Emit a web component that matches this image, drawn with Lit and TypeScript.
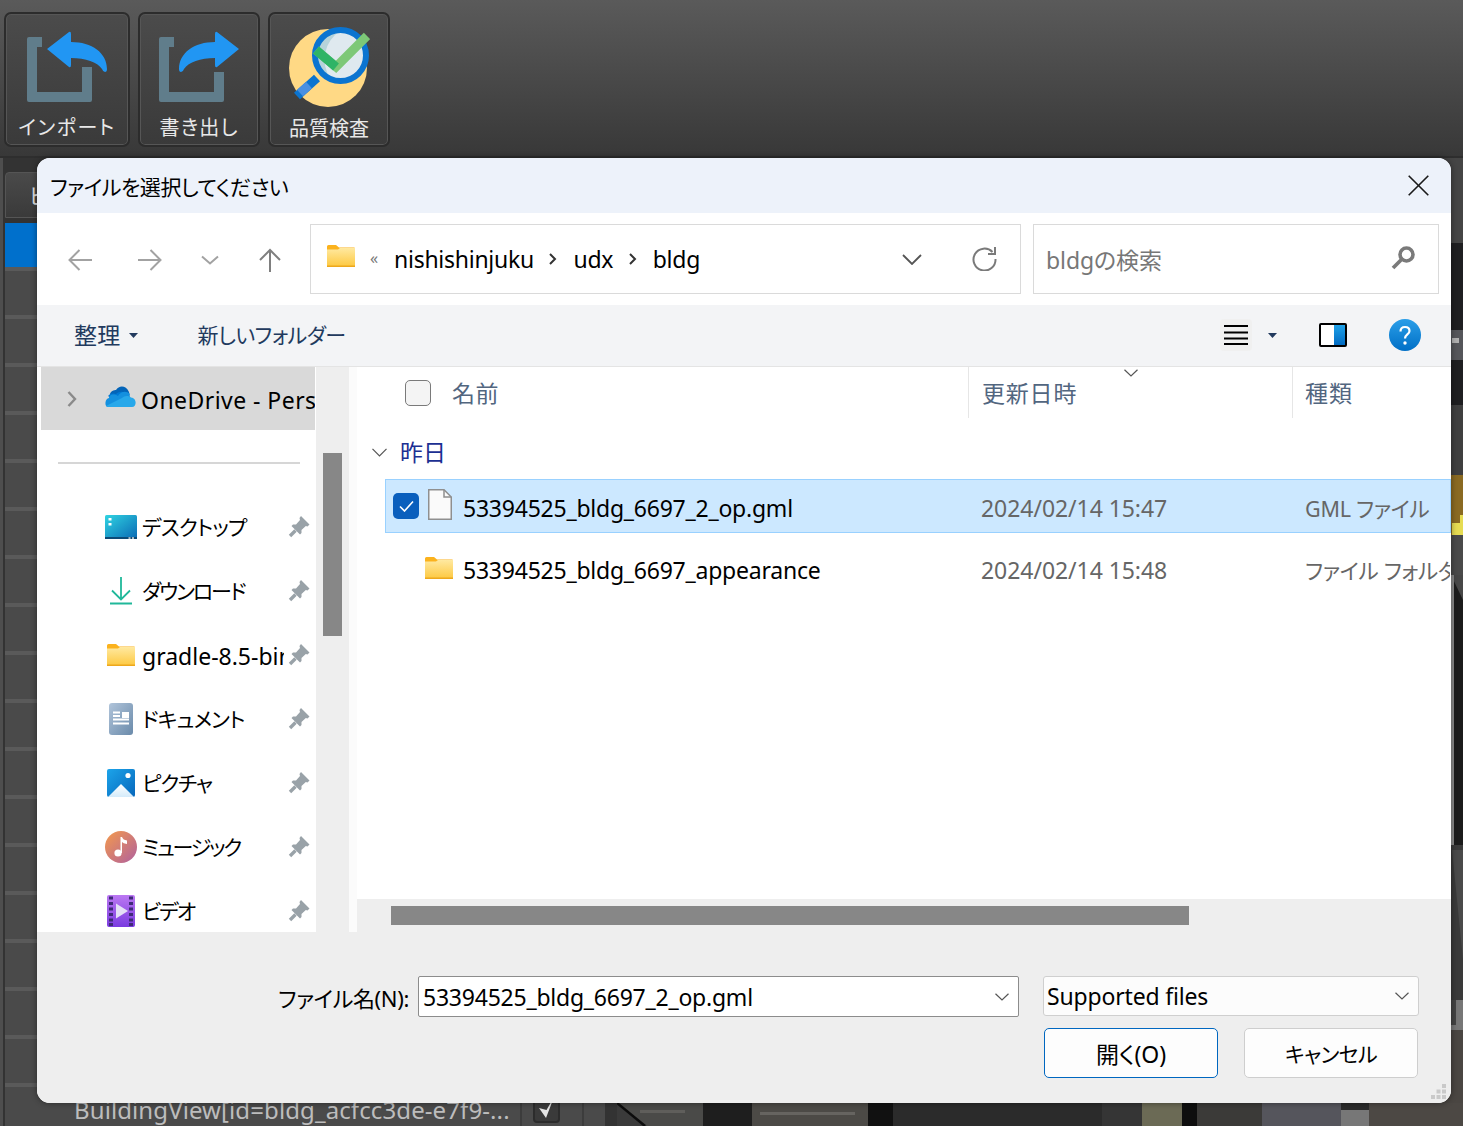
import { LitElement, html, css } from "lit";
import { customElement } from "lit/decorators.js";

const folder = (cls: string) => html`<svg class=${cls} viewBox="0 0 28 22">
  <defs><linearGradient id="fg" x1="0" y1="0" x2="0" y2="1"><stop offset="0" stop-color="#ffe9a0"/><stop offset="1" stop-color="#fdc83f"/></linearGradient></defs>
  <path d="M0 1.5Q0 0 1.5 0H9L12 2.5H27Q28 2.5 28 3.5V6H0Z" fill="#fbb21d"/>
  <path d="M0 4.5H11L13 3H28V21Q28 22 27 22H1Q0 22 0 21Z" fill="url(#fg)"/>
  <rect x="0" y="20.5" width="28" height="1.5" fill="#eda81c"/>
</svg>`;

const pin = html`<svg class="pin" viewBox="0 0 22 22"><path d="M13 0L21.5 8.5 19.5 10.5 17.8 10 13.5 14 13.5 17 12 18.5 3.5 10 5 8.5 8 8.5 12 4 11.5 2Z" fill="#99a2a8"/><path d="M7.5 14.5L2 20" stroke="#99a2a8" stroke-width="3.4" fill="none"/></svg>`;

const chev = (cls: string) => html`<svg class=${cls} viewBox="0 0 14 8"><path d="M.5.8L7 7 13.5.8" fill="none" stroke="#555" stroke-width="1.2"/></svg>`;

const navIcons = {
  desktop: html`<svg class="ico" viewBox="0 0 32 24"><defs><linearGradient id="dg" x1="0" y1="0" x2="1" y2="1"><stop offset="0" stop-color="#30d4e2"/><stop offset="1" stop-color="#0a69b4"/></linearGradient></defs><path d="M0 1.5Q0 0 1.5 0h29Q32 0 32 1.5V24H0Z" fill="url(#dg)"/><rect y="22" width="32" height="2" fill="#0c4a76"/><rect x="3.5" y="3" width="3" height="2.5" fill="#fff"/><rect x="3.5" y="8" width="3" height="2.5" fill="#fff"/><rect x="23.5" y="22.3" width="2" height="1.5" fill="#ddd"/><rect x="27" y="22.3" width="2" height="1.5" fill="#ddd"/></svg>`,
  download: html`<svg class="ico" viewBox="0 0 32 28"><path d="M16 0V22M7 13.5L16 22.5 25 13.5" fill="none" stroke="#20b89a" stroke-width="1.8"/><rect x="5" y="25.5" width="22" height="2" fill="#20b89a"/></svg>`,
  folder: folder("ico-folder"),
  doc: html`<svg class="ico" viewBox="0 0 32 32"><defs><linearGradient id="docg" x1="0" y1="0" x2="1" y2="1"><stop offset="0" stop-color="#b0c4da"/><stop offset="1" stop-color="#6a8aaa"/></linearGradient></defs><rect x="4" y="0" width="24" height="32" rx="3" fill="url(#docg)"/><path d="M8 9.5h7M8 13h7M8 16.5h16M8 20.5h16" stroke="#fff" stroke-width="1.8"/><rect x="17" y="9" width="7" height="6" fill="#fff"/></svg>`,
  picture: html`<svg class="ico" viewBox="0 0 32 28"><defs><linearGradient id="pg" x1="0" y1="0" x2="1" y2="1"><stop offset="0" stop-color="#1ca4ea"/><stop offset="1" stop-color="#0767bb"/></linearGradient><linearGradient id="pw" x1="0" y1="0" x2="0" y2="1"><stop offset="0" stop-color="#fff"/><stop offset="1" stop-color="#d4ebfa"/></linearGradient></defs><rect x="2" y="0" width="28" height="28" rx="2" fill="url(#pg)"/><path d="M3 28L16 15 29 28Z" fill="url(#pw)"/><circle cx="23" cy="6.5" r="2.6" fill="#fff"/></svg>`,
  music: html`<svg class="ico" viewBox="0 0 32 32"><defs><linearGradient id="mg" x1="0" y1="0" x2="1" y2="1"><stop offset="0" stop-color="#f49a4c"/><stop offset="1" stop-color="#b0609e"/></linearGradient></defs><circle cx="16" cy="16" r="16" fill="url(#mg)"/><circle cx="13" cy="22" r="3.6" fill="#fff"/><path d="M15.5 22V6h1.5q1 3 5 3.5V13q-4-.5-5-2V22Z" fill="#fff"/></svg>`,
  video: html`<svg class="ico" viewBox="0 0 32 32"><defs><linearGradient id="vg" x1="0" y1="0" x2="0" y2="1"><stop offset="0" stop-color="#bb78f2"/><stop offset="1" stop-color="#7a3be0"/></linearGradient></defs><rect x="2" y="0" width="28" height="32" rx="2" fill="url(#vg)"/><path d="M4 3h4M4 8.500h4M4 14h4M4 19.500h4M4 25h4M4 29.500h4M24 3h4M24 8.500h4M24 14h4M24 19.500h4M24 25h4M24 29.500h4" stroke="#3f2a78" stroke-width="3"/><path d="M11 8.500L23 16 11 23.500Z" fill="#e4e0f6"/></svg>`,
};

const places = [
  { icon: navIcons.desktop, name: "デスクトップ", ls: -0.8 },
  { icon: navIcons.download, name: "ダウンロード", ls: -2 },
  { icon: navIcons.folder, name: "gradle-8.5-bin", ls: 0 },
  { icon: navIcons.doc, name: "ドキュメント", ls: -0.8 },
  { icon: navIcons.picture, name: "ピクチャ", ls: -1.2 },
  { icon: navIcons.music, name: "ミュージック", ls: -2.2 },
  { icon: navIcons.video, name: "ビデオ", ls: -2 },
];

@customElement("app-root")
export class AppRoot extends LitElement {
  static styles = css`
    :host { display: block; position: relative; width: 1463px; height: 1126px; overflow: hidden; background: #3c3c3c;
      font-family: "Noto Sans", "Noto Sans CJK JP", sans-serif; font-feature-settings: "palt"; color: #000; }
    svg { display: block; flex: none; }

    /* application behind the dialog */
    .appbar { height: 158px; box-sizing: border-box; padding: 12px 0 0 4px; display: flex; gap: 8px;
      background: linear-gradient(#5a5a5a, #383838); border-bottom: 2px solid #2e2e2e; }
    .tbtn { width: 126px; height: 135px; box-sizing: border-box; border: 2px solid #2c2c2c; border-radius: 7px; padding-top: 16px;
      background: linear-gradient(#4b4b4b, #3a3a3a); box-shadow: inset 0 0 0 1px #565656; display: flex; flex-direction: column; align-items: center; }
    .tbtn.b2 { width: 122px; }
    .tbtn.b3 { width: 122px; padding-top: 13px; }
    .tbtn .lb { margin-top: 14px; font-size: 20px; line-height: 24px; color: #e8e8e8; letter-spacing: 1.2px; white-space: nowrap; }
    .tbtn:first-child .lb { letter-spacing: 1.5px; }
    .tbtn.b3 .lb { margin-top: 9px; letter-spacing: 0; }
    .tbi { width: 80px; height: 72px; }
    .tbq { width: 81px; height: 81px; }

    .below { display: grid; grid-template-columns: 617px 846px; height: 968px; }
    .panel { background: linear-gradient(90deg, #4e4e4e 3px, #333 3px); padding: 14px 0 0 5px; overflow: hidden; }
    .tab { width: 120px; height: 46px; box-sizing: border-box; padding-left: 23px; background: linear-gradient(#4a4a4a, #3a3a3a); border: 1px solid #555; border-radius: 4px 4px 0 0; font-size: 22px; line-height: 44px; color: #ddd; }
    .rows { display: flex; flex-direction: column; gap: 4px; margin-top: 5px; width: 600px; background: #5a5a5a; }
    .r { flex: none; height: 44px; background: #4a4a4a; display: grid; grid-template-columns: 515px 64px 21px; align-items: center; }
    .r.sel { background: #0070cc; }
    .r .t { padding-left: 69px; font-size: 24px; color: #bdbdbd; white-space: nowrap; overflow: hidden; letter-spacing: .1px; border-right: 0; }
    .ckw { height: 44px; box-sizing: border-box; border-left: 2px solid #3c3c3c; border-right: 2px solid #3c3c3c; display: flex; align-items: center; padding-left: 11px; }
    .ck { box-sizing: border-box; width: 27px; height: 27px; background: #3a3a3a; border: 2px solid #2c2c2c; border-radius: 4px; display: flex; align-items: center; justify-content: center; }
    .ck svg { width: 17px; height: 21px; margin-top: -4px; }
    .view { display: block; width: 846px; height: 968px; }

    /* dialog */
    .dlg { position: absolute; left: 37px; top: 158px; width: 1414px; height: 945px; border-radius: 13px; overflow: hidden; background: #fff;
      display: flex; flex-direction: column; box-shadow: 0 0 6px rgba(0,0,0,.45); }
    .title { flex: none; height: 55px; background: #edf2fa; display: flex; align-items: center; justify-content: space-between; padding: 0 22px 0 13px; font-size: 21px; }
    .title span { letter-spacing: -.45px; }
    .x { width: 21px; height: 21px; }

    .nav { flex: none; height: 92px; box-sizing: border-box; padding: 11px 12px 0 0; display: flex; }
    .navb { box-sizing: border-box; padding-top: 2px; display: grid; grid-template-columns: 86px 54px 65px 56px; margin-right: 12px; height: 70px; align-items: center; justify-items: center; }
    .box { box-sizing: border-box; height: 70px; border: 1.5px solid #dadada; display: flex; align-items: center; }
    .addr { width: 711px; padding-left: 16px; font-size: 23px; }
    .addr .f { width: 28px; height: 22px; margin-top: -6px; }
    .addr .q { margin: -3px 16px 0 15px; font-size: 16px; color: #777; width: 8px; }
    .addr .sep { width: 9px; height: 14px; margin: 0 16px 0 14.5px; }
    .addr .seg { letter-spacing: -.26px; }
    .addr .grow { flex: 1; }
    .addr .dd { width: 20px; height: 11px; margin-right: 50px; }
    .addr .ref { width: 25px; height: 25px; margin-right: 23px; margin-top: -2px; }
    .search { width: 406px; margin-left: 12px; padding: 0 22px 0 12px; justify-content: space-between; font-size: 23px; color: #777; }
    .search span { letter-spacing: -.1px; }
    .mag { width: 25px; height: 25px; margin-top: -4px; }

    .tools { flex: none; height: 62px; box-sizing: border-box; padding-bottom: 1px; border-bottom: 1.5px solid #e4e4e4; background: #f3f4f6; display: flex; align-items: center; padding-left: 37px; color: #223a5e; font-size: 23px; }
    .tools .o { letter-spacing: .3px; margin-top: -2px; }
    .tools .nf { margin: -2px 0 0 60px; font-size: 21px; letter-spacing: -.5px; }
    .caret { width: 9px; height: 5px; }
    .c1 { margin-left: 8px; }
    .c2r { margin-left: 16px; }
    .tools .sp { flex: 1; }
    .listb { width: 32px; height: 32px; border-radius: 4px; background: #f0f0f0; display: flex; align-items: center; justify-content: center; }
    .lines { width: 24px; height: 20px; }
    .pane { width: 28px; height: 24px; margin-left: 42px; }
    .help { width: 32px; height: 32px; margin: 0 30px 0 42px; }

    .main { flex: 1; min-height: 0; display: grid; grid-template-columns: 279px 33px 8px 1fr 0; }
    .side { overflow: hidden; }
    .od { margin-left: 4px; width: 274px; height: 63px; background: #d9d9d9; display: flex; align-items: center; overflow: hidden; font-size: 23px; white-space: nowrap; }
    .od .arr { width: 10px; height: 18px; margin-left: 26px; }
    .od .cloud { width: 32px; height: 21px; margin-left: 27px; margin-top: -4px; }
    .od .n { margin-left: 5px; letter-spacing: .45px; margin-top: 2px; }
    .div { height: 2px; background: #d6d6d6; margin: 32px 16px 31px 21px; }
    .pl { height: 64px; display: flex; align-items: center; padding-left: 68px; font-size: 21px; }
    .pl .slot { width: 32px; height: 32px; display: flex; align-items: center; justify-content: center; }
    .ico { width: 32px; }
    .ico-folder { width: 28px; height: 22px; }
    .pl .n { width: 142px; margin: -2px 0 0 5px; overflow: hidden; white-space: nowrap; }
    .pl .n.lat { font-size: 23px; margin-top: 2px; }
    .pin { width: 22px; height: 22px; margin-left: 4px; }
    .vs { background: #eee; padding: 86px 7px 0 7px; box-sizing: border-box; }
    .vs div { height: 183px; background: #878787; }
    .gutter { background: #fbfbfb; }

    .list { display: flex; flex-direction: column; min-width: 0; overflow: hidden; padding-left: 0; }
    .head { flex: none; height: 51px; display: grid; grid-template-columns: 611px 324px 1fr; font-size: 23px; color: #52667f; }
    .head > div { display: flex; align-items: center; padding-bottom: 2px; box-sizing: border-box; }
    .head .c1h { letter-spacing: .5px; }
    .head .c2, .head .c3 { border-left: 1.5px solid #e6e6e6; position: relative; }
    .head .c2 { padding-left: 13px; letter-spacing: .8px; }
    .head .c3 { padding-left: 12px; letter-spacing: 1px; }
    .cb { box-sizing: border-box; width: 26px; height: 26px; border-radius: 5px; border: 1.5px solid #7a7a7a; background: #f4f4f4; margin: 2px 21px 0 48px; }
    .sort { position: absolute; left: 155px; top: 2px; width: 14px; height: 8px; }
    .grp { flex: none; height: 61px; box-sizing: border-box; padding: 4px 0 0 15px; display: flex; align-items: center; font-size: 23px; color: #1c2f92; }
    .grp svg { width: 15px; height: 9px; margin: 4px 13px 0 0; }
    .rw { flex: none; margin-left: 28px; height: 54px; box-sizing: border-box; border: 1.5px solid transparent; display: grid; grid-template-columns: 7px 26px 44px 518px 324px 1fr; align-items: center; font-size: 23px; white-space: nowrap; }
    .rw.on { background: #cce8ff; border-color: #99d1ff; }
    .rw.r2 { margin-top: 8px; }
    .rw .tick { grid-column: 2; width: 26px; height: 26px; border-radius: 5px; background: #0a5fbd; display: flex; align-items: center; justify-content: center; }
    .rw .tick svg { width: 15px; height: 12px; }
    .rw .ic { grid-column: 3; }
    .fl { width: 24px; height: 31px; margin-left: 9px; margin-top: -4px; }
    .rw .ic .ico-folder { margin-left: 6px; }
    .rw .nm { letter-spacing: -.23px; margin-top: 4px; }
    .rw .d { color: #666; letter-spacing: -.06px; margin-top: 4px; }
    .rw .ty { color: #666; overflow: hidden; font-size: 21.5px; letter-spacing: -.25px; margin-top: 3px; }
    .spacer { flex: 1; }
    .hs { flex: none; height: 33px; box-sizing: border-box; background: #eee; padding: 7px 0 0 34px; }
    .hs div { width: 798px; height: 19px; background: #878787; }

    .foot { flex: none; height: 171px; box-sizing: border-box; background: #eee; padding-top: 44px; position: relative; font-size: 23px; }
    .fr { display: grid; grid-template-columns: 372px 601px 376px; column-gap: 0; align-items: start; }
    .fr .lbl { text-align: right; font-size: 22px; height: 41px; line-height: 44px; letter-spacing: -.35px; white-space: nowrap; }
    .inp { box-sizing: border-box; margin-left: 9px; width: 601px; height: 41px; background: #fff; border: 1.5px solid #8c8c8c; border-radius: 2px; display: flex; align-items: center; justify-content: space-between; padding: 0 9px 0 4px; }
    .inp span { letter-spacing: -.23px; }
    .sel2 { box-sizing: border-box; margin-left: 33px; width: 376px; height: 40px; background: #fcfcfc; border: 1.5px solid #cfcfcf; border-radius: 3px; display: flex; align-items: center; justify-content: space-between; padding: 0 9px 0 3px; letter-spacing: -.17px; }
    .chv { width: 14px; height: 8px; }
    .btns { display: flex; gap: 26px; margin: 11px 0 0 1007px; }
    .btn { box-sizing: border-box; width: 174px; height: 50px; border: 1.5px solid #cecece; border-radius: 5px; background: #fdfdfd; display: flex; align-items: center; justify-content: center; font-size: 23px; letter-spacing: -.1px; }
    .btn.ca { font-size: 21px; letter-spacing: -.6px; }
    .btn.pri { border-color: #0067c0; }
    .grip { position: absolute; right: 3px; bottom: 4px; width: 17px; height: 15px; }
  `;

  render() {
    const rows = Array.from({ length: 19 }, (_, i) => i);
    return html`
      <div class="appbar">
        <div class="tbtn">
          <svg class="tbi" viewBox="27 30 80 72">
            <path d="M42 37H29Q27 37 27 39V100Q27 102 29 102H90Q92 102 92 100V67H82V92H37V47H42Z" fill="#607d8b"/>
            <path d="M47 49L69 32Q71 31 71 34V42C92 42 107 53 107 69Q107 72 105 72 103 72 102 69C97 62 86 58 71 58V65Q71 68 69 67Z" fill="#2196f3"/>
          </svg>
          <div class="lb">インポート</div>
        </div>
        <div class="tbtn b2">
          <svg class="tbi" viewBox="159 30 80 72">
            <path d="M174 37H161Q159 37 159 39V100Q159 102 161 102H222Q224 102 224 100V72H214V92H169V47H174Z" fill="#607d8b"/>
            <path d="M239 49L217 32Q215 31 215 34V42C194 42 179 53 179 69Q179 72 181 72 183 72 184 69C189 62 200 58 215 58V65Q215 68 217 67Z" fill="#2196f3"/>
          </svg>
          <div class="lb">書き出し</div>
        </div>
        <div class="tbtn b3">
          <svg class="tbq" viewBox="289 27 81 81">
            <circle cx="328" cy="68" r="39" fill="#ffd985"/>
            <path d="M317 78L297 96" stroke="#0b74d0" stroke-width="9" fill="none"/>
            <path d="M309 85L300 93" stroke="#4a90e2" stroke-width="9" fill="none"/>
            <circle cx="340.500" cy="55.500" r="25" fill="#dfe9ef"/>
            <path d="M340 31A25 25 0 0 0 330 78 34 34 0 0 1 340 31Z" fill="#b6d3da"/>
            <circle cx="340.500" cy="55.500" r="25.500" fill="none" stroke="#0b74d0" stroke-width="6"/>
            <path d="M316 50L336 67 367 36" fill="none" stroke="#7dc877" stroke-width="9"/>
            <path d="M316 50L336 67" fill="none" stroke="#2fb466" stroke-width="9"/>
          </svg>
          <div class="lb">品質検査</div>
        </div>
      </div>
      <div class="below">
        <div class="panel">
          <div class="tab">ビ</div>
          <div class="rows">
            ${rows.map((i) => html`<div class="r ${i === 0 ? "sel" : ""}">
              <div class="t">${i === 18 ? "BuildingView[id=bldg_acfcc3de-e7f9-..." : ""}</div>
              <div class="ckw">${i === 18 ? html`<div class="ck"><svg viewBox="0 0 17 21"><path d="M1 11L8 21 16 0 8.500 13Z" fill="#e4e4e4"/></svg></div>` : ""}</div>
              <div></div>
            </div>`)}
          </div>
        </div>
        <svg class="view" viewBox="617 158 846 968">
          <rect x="617" y="158" width="846" height="968" fill="#454545"/>
          <rect x="617" y="243" width="846" height="162" fill="#1f1f21"/>
          <rect x="1451" y="330" width="12" height="30" fill="#55565a"/>
          <rect x="1452" y="338" width="7" height="5" fill="#b0b0b0"/>
          <rect x="617" y="405" width="846" height="70" fill="#3f3f3f"/>
          <rect x="617" y="475" width="846" height="60" fill="#8a6a22"/>
          <rect x="1460" y="515" width="3" height="8" fill="#e6dc52"/>
          <rect x="1452" y="523" width="11" height="12" fill="#e6dc52"/>
          <rect x="617" y="535" width="846" height="40" fill="#4a4a4a"/>
          <rect x="617" y="575" width="846" height="270" fill="#1b1b1b"/>
          <path d="M1451 575L1463 600V575Z" fill="#474747"/>
          <rect x="1451" y="575" width="3" height="270" fill="#8a8a8a"/>
          <rect x="617" y="845" width="846" height="155" fill="#3a3a3a"/>
          <path d="M1452 850L1463 960V850Z" fill="#4a4a4a"/>
          <rect x="617" y="1000" width="846" height="30" fill="#777"/>
          <rect x="1451" y="1000" width="5" height="25" fill="#444"/>
          <rect x="617" y="1030" width="846" height="96" fill="#4a4642"/>
          <rect x="617" y="1103" width="846" height="23" fill="#2b2b2b"/>
          <rect x="617" y="1103" width="86" height="23" fill="#4a4a48"/>
          <path d="M617 1103L647 1126H617Z" fill="#3a3a3a"/>
          <path d="M617 1103L645 1126" stroke="#0c0c0c" stroke-width="2.500"/>
          <rect x="640" y="1110" width="45" height="3" fill="#5f5e5b"/>
          <rect x="703" y="1103" width="49" height="23" fill="#1e1e1e"/>
          <rect x="752" y="1103" width="116" height="23" fill="#4c4a46"/>
          <rect x="760" y="1112" width="95" height="3" fill="#666460"/>
          <rect x="868" y="1103" width="25" height="23" fill="#111"/>
          <rect x="1102" y="1103" width="40" height="23" fill="#353535"/>
          <rect x="1142" y="1103" width="40" height="23" fill="#6b6a55"/>
          <rect x="1182" y="1103" width="15" height="23" fill="#0e0e0e"/>
          <rect x="1197" y="1103" width="65" height="23" fill="#3b3a38"/>
          <rect x="1262" y="1103" width="79" height="23" fill="#55555c"/>
          <rect x="1341" y="1110" width="28" height="16" fill="#777"/>
          <rect x="1369" y="1103" width="94" height="23" fill="#4c4844"/>
        </svg>
      </div>

      <div class="dlg">
        <div class="title">
          <span>ファイルを選択してください</span>
          <svg class="x" viewBox="0 0 21 21"><path d="M.7.7L20.300 20.300M20.300.7L.7 20.300" stroke="#1a1a1a" stroke-width="1.6"/></svg>
        </div>
        <div class="nav">
          <div class="navb">
            <svg width="24" height="22" viewBox="0 0 24 22"><path d="M24 11H2M11.500 1L1.500 11 11.500 21" fill="none" stroke="#a2a2a2" stroke-width="2"/></svg>
            <svg width="24" height="22" viewBox="0 0 24 22"><path d="M0 11H22M12.500 1L22.500 11 12.500 21" fill="none" stroke="#a2a2a2" stroke-width="2"/></svg>
            <svg width="18" height="10" viewBox="0 0 18 10"><path d="M1 1.500L9 8.500 17 1.500" fill="none" stroke="#a2a2a2" stroke-width="2"/></svg>
            <svg width="22" height="24" viewBox="0 0 22 24"><path d="M11 24V2M1 12L11 2 21 12" fill="none" stroke="#7f7f7f" stroke-width="2"/></svg>
          </div>
          <div class="box addr">
            ${folder("f")}
            <span class="q">«</span>
            <span class="seg">nishishinjuku</span>
            <svg class="sep" viewBox="0 0 9 14"><path d="M2 2L7 7 2 12" fill="none" stroke="#333" stroke-width="2"/></svg>
            <span class="seg">udx</span>
            <svg class="sep" viewBox="0 0 9 14"><path d="M2 2L7 7 2 12" fill="none" stroke="#333" stroke-width="2"/></svg>
            <span class="seg">bldg</span>
            <span class="grow"></span>
            <svg class="dd" viewBox="0 0 20 11"><path d="M1 1L10 10 19 1" fill="none" stroke="#555" stroke-width="1.800"/></svg>
            <svg class="ref" viewBox="0 0 25 25"><path d="M20.500 6A11 11 0 1 0 23.500 13" fill="none" stroke="#7a7a7a" stroke-width="2"/><path d="M23 1V8H16" fill="none" stroke="#7a7a7a" stroke-width="2"/></svg>
          </div>
          <div class="box search">
            <span>bldgの検索</span>
            <svg class="mag" viewBox="0 0 25 25"><circle cx="15.500" cy="9.500" r="6.500" fill="none" stroke="#7a7a7a" stroke-width="3.600"/><path d="M10.500 14.500L2 23" stroke="#7a7a7a" stroke-width="3.800"/></svg>
          </div>
        </div>
        <div class="tools">
          <span class="o">整理</span>
          <svg class="caret c1" viewBox="0 0 9 5"><path d="M0 0H9L4.500 5Z" fill="#223a5e"/></svg>
          <span class="nf">新しいフォルダー</span>
          <span class="sp"></span>
          <div class="listb"><svg class="lines" viewBox="0 0 24 20"><path d="M0 1H24M0 7.500H24M0 13.500H24M0 19H24" stroke="#000" stroke-width="2"/></svg></div>
          <svg class="caret c2r" viewBox="0 0 9 5"><path d="M0 0H9L4.500 5Z" fill="#223a5e"/></svg>
          <svg class="pane" viewBox="0 0 28 24">
            <defs><linearGradient id="pnb" x1="0" y1="0" x2="0" y2="1"><stop offset="0" stop-color="#20a4ea"/><stop offset="1" stop-color="#0068c0"/></linearGradient></defs>
            <rect x="1" y="1" width="26" height="22" rx="1" fill="#fff"/>
            <rect x="15" y="1" width="12" height="22" fill="url(#pnb)"/>
            <rect x="1" y="1" width="26" height="22" rx="1" fill="none" stroke="#000" stroke-width="2"/>
          </svg>
          <svg class="help" viewBox="0 0 32 32">
            <defs><linearGradient id="hg" x1="0" y1="0" x2="0" y2="1"><stop offset="0" stop-color="#2a9ee8"/><stop offset="1" stop-color="#006fc6"/></linearGradient></defs>
            <circle cx="16" cy="16" r="16" fill="url(#hg)"/>
            <path d="M11.500 12.500C11.500 9.500 13.500 8 16 8S20.500 9.500 20.500 12C20.500 15.500 16 15.500 16 19.500" fill="none" stroke="#fff" stroke-width="2.200"/>
            <circle cx="16" cy="24" r="1.700" fill="#fff"/>
          </svg>
        </div>
        <div class="main">
          <div class="side">
            <div class="od">
              <svg class="arr" viewBox="0 0 10 18"><path d="M1.500 2L8 9 1.500 16" fill="none" stroke="#8a8a8a" stroke-width="2.400"/></svg>
              <svg class="cloud" viewBox="0 0 32 21">
                <path d="M7 15C3 5 10 4 12 4 15 -1 22 -1 25 6L26 13Z" fill="#0364b8"/>
                <path d="M4 10C6 7 10 7 12 8 15 5 21 5 24 9L16 18Z" fill="#0078d4"/>
                <path d="M4 21H20L26 8C22 4 16 6 14 10 9 7 5 9 5 12 1 12 0 21 4 21Z" fill="#1490df"/>
                <path d="M4 21H28C33 21 33 12 27 11.500 24 9 20 10 18 12L2 20Q3 21 4 21Z" fill="#28a8ea"/>
              </svg>
              <span class="n">OneDrive - Personal</span>
            </div>
            <div class="div"></div>
            ${places.map((p) => html`<div class="pl">
              <span class="slot">${p.icon}</span>
              <span class="n ${p.ls === 0 ? "lat" : ""}" style="letter-spacing:${p.ls}px">${p.name}</span>
              ${pin}
            </div>`)}
          </div>
          <div class="vs"><div></div></div>
          <div class="gutter"></div>
          <div class="list">
            <div class="head">
              <div class="c1h"><span class="cb"></span>名前</div>
              <div class="c2">更新日時<svg class="sort" viewBox="0 0 14 8"><path d="M.5.8L7 7 13.500.8" fill="none" stroke="#555" stroke-width="1.200"/></svg></div>
              <div class="c3">種類</div>
            </div>
            <div class="grp">
              <svg viewBox="0 0 15 9"><path d="M.5.8L7.500 8 14.500.8" fill="none" stroke="#555" stroke-width="1.200"/></svg>
              <span>昨日</span>
            </div>
            <div class="rw on">
              <span class="tick"><svg viewBox="0 0 15 12"><path d="M1 6.500L5.500 11 14 1.500" fill="none" stroke="#fff" stroke-width="1.600"/></svg></span>
              <span class="ic"><svg class="fl" viewBox="0 0 24 31"><path d="M.75.75H16L23.250 8V30.250H.75Z" fill="#fafafa" stroke="#8f8f8f" stroke-width="1.500"/><path d="M16 .75V8H23.250" fill="none" stroke="#8f8f8f" stroke-width="1.500"/></svg></span>
              <span class="nm">53394525_bldg_6697_2_op.gml</span>
              <span class="d">2024/02/14 15:47</span>
              <span class="ty">GML ファイル</span>
            </div>
            <div class="rw r2">
              <span></span><span></span>
              <span class="ic">${folder("ico-folder")}</span>
              <span class="nm">53394525_bldg_6697_appearance</span>
              <span class="d">2024/02/14 15:48</span>
              <span class="ty">ファイル フォルダー</span>
            </div>
            <div class="spacer"></div>
            <div class="hs"><div></div></div>
          </div>
        </div>
        <div class="foot">
          <div class="fr">
            <div class="lbl">ファイル名(N):</div>
            <div class="inp"><span>53394525_bldg_6697_2_op.gml</span>${chev("chv")}</div>
            <div class="sel2"><span>Supported files</span>${chev("chv")}</div>
          </div>
          <div class="btns">
            <div class="btn pri">開く(O)</div>
            <div class="btn ca">キャンセル</div>
          </div>
          <svg class="grip" viewBox="0 0 17 15" fill="#c9c9c9">
            <rect x="11" y="0" width="4" height="4"/><rect x="5.500" y="5.500" width="4" height="4"/><rect x="11" y="5.500" width="4" height="4"/>
            <rect x="0" y="11" width="4" height="4"/><rect x="5.500" y="11" width="4" height="4"/><rect x="11" y="11" width="4" height="4"/>
          </svg>
        </div>
      </div>
    `;
  }
}
